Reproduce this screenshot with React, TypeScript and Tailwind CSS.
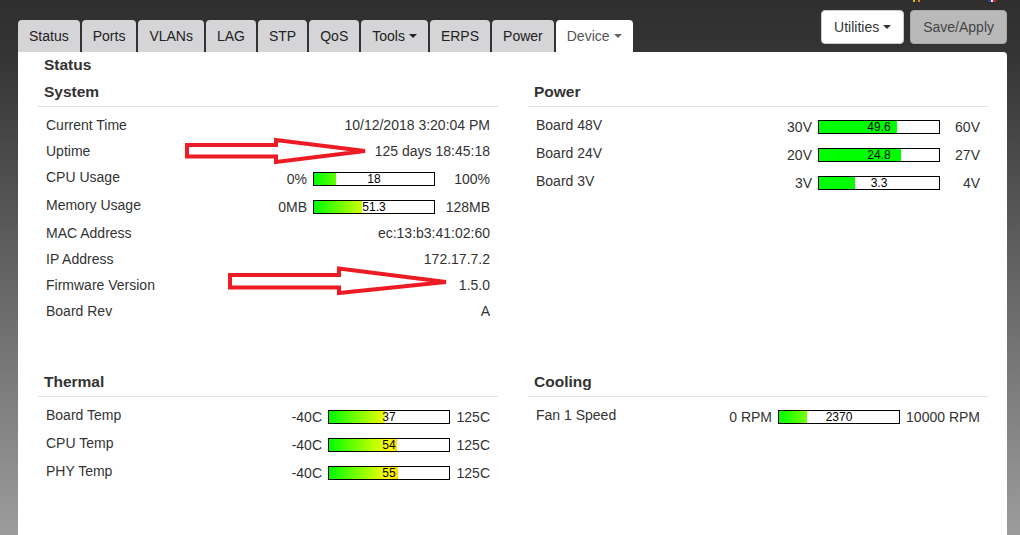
import React from "react";

const FONT = { fontFamily: '"Liberation Sans", Arial, sans-serif' };

function Caret({ cls }: { cls: string }) {
  return (
    <span
      className={
        "ml-[4px] inline-block h-0 w-0 border-x-[4px] border-t-[4px] border-x-transparent align-middle " +
        cls
      }
    />
  );
}

function Tab({ label, caret, active }: { label: string; caret?: boolean; active?: boolean }) {
  return (
    <div
      className={
        "flex h-[32px] items-center rounded-t-[4px] px-[11px] text-[14px] leading-[20px] " +
        (active ? "bg-white text-[#555]" : "bg-[#d5d5d7] text-[#222]")
      }
    >
      {label}
      {caret && <Caret cls={active ? "border-t-[#666]" : "border-t-[#222]"} />}
    </div>
  );
}

function Heading({ title }: { title: string }) {
  return (
    <div className="border-b border-[#e2e2e2] px-[6px] pb-[4px] text-[15.5px] font-bold leading-[20px] text-[#333]">
      {title}
    </div>
  );
}

function TextRow({ label, value }: { label: string; value: string }) {
  return (
    <div className="flex h-[26px] items-center justify-between px-[8px]">
      <span>{label}</span>
      <span>{value}</span>
    </div>
  );
}

type BarProps = {
  label: string;
  min: string;
  max: string;
  value: string;
  pct: number;
  solid?: boolean;
  maxW: string;
};

function BarRow({ label, min, max, value, pct, solid, maxW }: BarProps) {
  return (
    <div className="flex h-[28px] items-start justify-between px-[8px]">
      <span className="mt-[3px] leading-[20px]">{label}</span>
      <div className="mt-[5px] flex h-[20px] items-center">
        <span>{min}</span>
        <div className="relative ml-[6px] h-[14px] w-[122px] border border-black bg-white">
          <div className="h-full overflow-hidden" style={{ width: `${pct}%` }}>
            <div
              className={
                "h-full w-[120px] " +
                (solid
                  ? "bg-[#00ff00]"
                  : "bg-[linear-gradient(to_right,#00ff00_0%,#ffff00_50%,#ff0000_100%)]")
              }
            />
          </div>
          <span className="absolute inset-0 flex items-center justify-center text-[12px] leading-none text-black">
            {value}
          </span>
        </div>
        <span className={maxW + " text-right"}>{max}</span>
      </div>
    </div>
  );
}

export default function App() {
  return (
    <div
      className="relative h-[535px] w-[1020px] overflow-hidden bg-[linear-gradient(to_bottom,#2f2f2f_0%,#343434_10%,#9c9c9c_100%)] text-[14px] text-[#333]"
      style={FONT}
    >
      {/* clipped flags at top */}
      <div className="flex h-0 items-start">
        <span className="ml-[913px] h-[2px] w-[2px] bg-[#e8b000]" />
        <span className="ml-[3px] h-[2px] w-[2px] bg-[#f08000]" />
        <span className="ml-[68px] h-[2px] w-[3px] bg-[#2a3d9a]" />
        <span className="h-[2px] w-[2px] bg-white" />
        <span className="h-[2px] w-[3px] bg-[#d0202a]" />
      </div>

      <div className="ml-[18px] w-[989px]">
        <div className="flex h-[52px] justify-between">
          <div className="flex items-end gap-[2px]">
            <Tab label="Status" />
            <Tab label="Ports" />
            <Tab label="VLANs" />
            <Tab label="LAG" />
            <Tab label="STP" />
            <Tab label="QoS" />
            <Tab label="Tools" caret />
            <Tab label="ERPS" />
            <Tab label="Power" />
            <Tab label="Device" caret active />
          </div>
          <div className="mt-[10px] flex gap-[6px] self-start">
            <div className="flex h-[34px] items-center rounded-[4px] border border-[#ccc] bg-white px-[12px] leading-[20px] text-[#333]">
              Utilities
              <Caret cls="border-t-[#333]" />
            </div>
            <div className="flex h-[34px] items-center rounded-[4px] border border-[#a8a8a8] bg-[#b9b9b9] px-[12px] leading-[20px] text-[#444]">
              Save/Apply
            </div>
          </div>
        </div>

        <div className="h-[483px] rounded-tr-[4px] bg-white pl-[20px] pr-[19px] pt-[3px]">
          <div className="px-[6px] text-[15.5px] font-bold leading-[20px] text-[#333]">Status</div>

          <div className="mt-[7px] grid grid-cols-[460px_460px] gap-x-[30px]">
            <div>
              <Heading title="System" />
              <div className="mt-[5px]">
                <TextRow label="Current Time" value="10/12/2018 3:20:04 PM" />
                <TextRow label="Uptime" value="125 days 18:45:18" />
                <BarRow label="CPU Usage" min="0%" max="100%" value="18" pct={18.3} maxW="w-[55px]" />
                <BarRow label="Memory Usage" min="0MB" max="128MB" value="51.3" pct={40} maxW="w-[55px]" />
                <TextRow label="MAC Address" value="ec:13:b3:41:02:60" />
                <TextRow label="IP Address" value="172.17.7.2" />
                <TextRow label="Firmware Version" value="1.5.0" />
                <TextRow label="Board Rev" value="A" />
              </div>
            </div>
            <div>
              <Heading title="Power" />
              <div className="mt-[5px]">
                <BarRow label="Board 48V" min="30V" max="60V" value="49.6" pct={65.3} solid maxW="w-[40px]" />
                <BarRow label="Board 24V" min="20V" max="27V" value="24.8" pct={68.6} solid maxW="w-[40px]" />
                <BarRow label="Board 3V" min="3V" max="4V" value="3.3" pct={30} solid maxW="w-[40px]" />
              </div>
            </div>
          </div>

          <div className="mt-[48px] grid grid-cols-[460px_460px] gap-x-[30px]">
            <div>
              <Heading title="Thermal" />
              <div className="mt-[5px]">
                <BarRow label="Board Temp" min="-40C" max="125C" value="37" pct={46.7} maxW="w-[40px]" />
                <BarRow label="CPU Temp" min="-40C" max="125C" value="54" pct={57} maxW="w-[40px]" />
                <BarRow label="PHY Temp" min="-40C" max="125C" value="55" pct={57.6} maxW="w-[40px]" />
              </div>
            </div>
            <div>
              <Heading title="Cooling" />
              <div className="mt-[5px]">
                <BarRow label="Fan 1 Speed" min="0 RPM" max="10000 RPM" value="2370" pct={23.7} maxW="w-[80px]" />
              </div>
            </div>
          </div>
        </div>
      </div>

      {/* red annotation arrows */}
      <svg
        className="pointer-events-none absolute left-0 top-0"
        width="1020"
        height="535"
        viewBox="0 0 1020 535"
      >
        <polygon
          points="187,145 276,145 276,140 365,151 276,162 276,156.5 187,156.5"
          fill="none"
          stroke="#ed1c24"
          strokeWidth="4"
          strokeLinejoin="miter"
        />
        <polygon
          points="230,275 339,275 339,268.5 446,282 339,293 339,287.5 230,287.5"
          fill="none"
          stroke="#ed1c24"
          strokeWidth="4"
          strokeLinejoin="miter"
        />
      </svg>
    </div>
  );
}
